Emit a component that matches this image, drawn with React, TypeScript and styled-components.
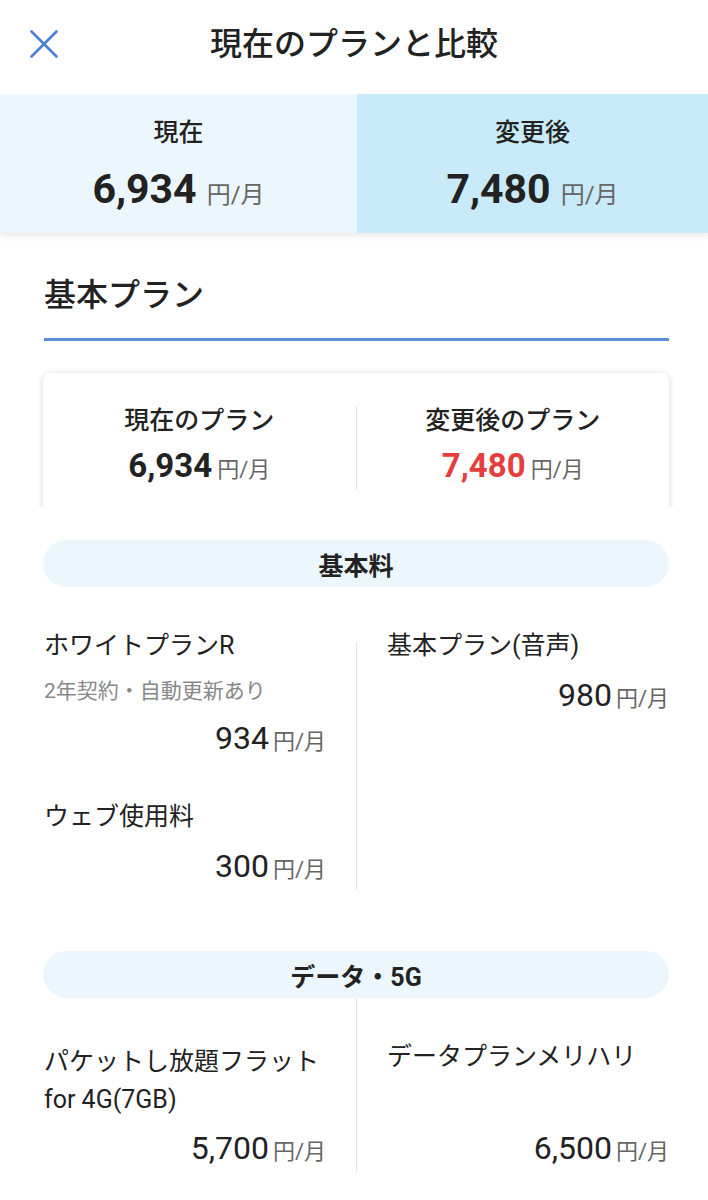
import React from 'react';
import styled, { createGlobalStyle } from 'styled-components';

const Global = createGlobalStyle`
  html, body { margin: 0; padding: 0; background: #fff; }
  body { font-family: Roboto, "Noto Sans CJK JP", sans-serif; color: #222; }
  * { box-sizing: border-box; }
`;

const Page = styled.div`
  width: 708px;
  overflow: hidden;
`;

const TopBar = styled.header`
  height: 94px;
  display: grid;
  grid-template-columns: 88px 1fr 88px;
  align-items: center;
  padding-bottom: 6px;
`;

const CloseButton = styled.button`
  border: 0;
  background: none;
  padding: 0 0 0 30px;
  margin: 0;
  display: flex;
  align-items: center;
  cursor: pointer;
`;

const Title = styled.h1`
  margin: 0;
  text-align: center;
  font-size: 32px;
  line-height: 44px;
  font-weight: 500;
  color: #222;
`;

const SummaryBand = styled.div`
  position: relative;
  z-index: 1;
  display: grid;
  grid-template-columns: 357px 1fr;
  height: 139px;
  box-shadow: 0 4px 6px rgba(0, 0, 0, 0.07);
`;

const SummaryCell = styled.div<{ $bg: string }>`
  background: ${(p) => p.$bg};
  display: flex;
  flex-direction: column;
  align-items: center;
  padding-top: 22px;
`;

const SummaryLabel = styled.div`
  font-size: 25px;
  line-height: 34px;
  font-weight: 500;
`;

const SummaryPrice = styled.div`
  margin-top: 14px;
  display: flex;
  align-items: baseline;
  line-height: 50px;
`;

const BigNumber = styled.span<{ $size: number; $color?: string }>`
  font-size: ${(p) => p.$size}px;
  font-weight: 700;
  color: ${(p) => p.$color || '#222'};
`;

const Unit = styled.span<{ $size: number; $gap: number }>`
  font-size: ${(p) => p.$size}px;
  color: #666;
  margin-left: ${(p) => p.$gap}px;
`;

const Section = styled.section`
  padding: 0 39px 0 43px;
`;

const SectionTitle = styled.h2`
  margin: 40px 0 0 1px;
  font-size: 32px;
  line-height: 44px;
  font-weight: 500;
  padding-bottom: 21px;
  border-bottom: 3px solid #5b8dd9;
`;

const CardClip = styled.div`
  margin: 20px -12px 0;
  padding: 12px 12px 0;
  height: 146px;
  overflow: hidden;
`;

const Card = styled.div`
  background: #fff;
  border-radius: 8px;
  box-shadow: 0 1px 7px rgba(0, 0, 0, 0.16);
  display: grid;
  grid-template-columns: 1fr 1px 1fr;
  padding: 31px 0 40px;
`;

const CardCol = styled.div`
  display: flex;
  flex-direction: column;
  align-items: center;
`;

const CardLabel = styled.div`
  font-size: 25px;
  line-height: 34px;
  font-weight: 500;
`;

const CardPrice = styled.div`
  margin-top: 8px;
  display: flex;
  align-items: baseline;
  line-height: 40px;
`;

const VDivider = styled.div<{ $top?: number }>`
  background: #e2e2e2;
  width: 1px;
  margin-top: ${(p) => p.$top || 0}px;
`;

const Pill = styled.div<{ $top: number }>`
  margin-top: ${(p) => p.$top}px;
  height: 47px;
  border-radius: 24px;
  background: #ebf6fd;
  display: flex;
  align-items: center;
  justify-content: center;
  font-size: 25px;
  font-weight: 700;
  color: #222;
`;

const CompareGrid = styled.div`
  display: grid;
  grid-template-columns: 1fr 1px 1fr;
  column-gap: 30px;
  padding-left: 1px;
`;

const Column = styled.div<{ $top: number }>`
  padding-top: ${(p) => p.$top}px;
  display: flex;
  flex-direction: column;
`;

const Item = styled.div<{ $fill?: boolean }>`
  display: flex;
  flex-direction: column;
  flex: ${(p) => (p.$fill ? 1 : 'none')};
  & + & {
    margin-top: 35px;
  }
`;

const ItemLabel = styled.div<{ $lh?: number }>`
  font-size: 25px;
  line-height: ${(p) => p.$lh || 40}px;
  color: #222;
`;

const ItemSub = styled.div`
  margin-top: 10px;
  padding-bottom: 3px;
  font-size: 21px;
  line-height: 30px;
  color: #888;
`;

const ItemPrice = styled.div<{ $push?: boolean }>`
  margin-top: ${(p) => (p.$push ? 'auto' : '9px')};
  padding-top: ${(p) => (p.$push ? '9px' : '0')};
  display: flex;
  justify-content: flex-end;
  align-items: baseline;
  line-height: 40px;
`;

const PriceNumber = styled.span`
  font-size: 32px;
  color: #222;
`;

const CloseIcon = () => (
  <svg width="28" height="28" viewBox="0 0 28 28" fill="none">
    <path d="M1.5 1.5L26.5 26.5M26.5 1.5L1.5 26.5" stroke="#4a80d4" strokeWidth="2.6" strokeLinecap="round" />
  </svg>
);

const Price = ({ value, push }: { value: string; push?: boolean }) => (
  <ItemPrice $push={push}>
    <PriceNumber>{value}</PriceNumber>
    <Unit $size={22} $gap={4}>円/月</Unit>
  </ItemPrice>
);

export default function App() {
  return (
    <Page>
      <Global />
      <TopBar>
        <CloseButton aria-label="閉じる">
          <CloseIcon />
        </CloseButton>
        <Title>現在のプランと比較</Title>
        <div />
      </TopBar>

      <SummaryBand>
        <SummaryCell $bg="#ebf7fd">
          <SummaryLabel>現在</SummaryLabel>
          <SummaryPrice>
            <BigNumber $size={41}>6,934</BigNumber>
            <Unit $size={24} $gap={10}>円/月</Unit>
          </SummaryPrice>
        </SummaryCell>
        <SummaryCell $bg="#c9eaf9">
          <SummaryLabel>変更後</SummaryLabel>
          <SummaryPrice>
            <BigNumber $size={41}>7,480</BigNumber>
            <Unit $size={24} $gap={10}>円/月</Unit>
          </SummaryPrice>
        </SummaryCell>
      </SummaryBand>

      <Section>
        <SectionTitle>基本プラン</SectionTitle>

        <CardClip>
          <Card>
            <CardCol>
              <CardLabel>現在のプラン</CardLabel>
              <CardPrice>
                <BigNumber $size={33}>6,934</BigNumber>
                <Unit $size={22} $gap={5}>円/月</Unit>
              </CardPrice>
            </CardCol>
            <VDivider $top={2} />
            <CardCol>
              <CardLabel>変更後のプラン</CardLabel>
              <CardPrice>
                <BigNumber $size={33} $color="#e63e3e">7,480</BigNumber>
                <Unit $size={22} $gap={5}>円/月</Unit>
              </CardPrice>
            </CardCol>
          </Card>
        </CardClip>

        <Pill $top={33}>基本料</Pill>
        <CompareGrid>
          <Column $top={39}>
            <Item>
              <ItemLabel>ホワイトプランR</ItemLabel>
              <ItemSub>2年契約・自動更新あり</ItemSub>
              <Price value="934" />
            </Item>
            <Item>
              <ItemLabel>ウェブ使用料</ItemLabel>
              <Price value="300" />
            </Item>
          </Column>
          <VDivider $top={55} />
          <Column $top={39}>
            <Item>
              <ItemLabel>基本プラン(音声)</ItemLabel>
              <Price value="980" />
            </Item>
          </Column>
        </CompareGrid>

        <Pill $top={61}>データ・5G</Pill>
        <CompareGrid>
          <Column $top={45}>
            <Item $fill>
              <ItemLabel $lh={38}>
                パケットし放題フラット
                <br />
                for 4G(7GB)
              </ItemLabel>
              <Price value="5,700" push />
            </Item>
          </Column>
          <VDivider />
          <Column $top={39}>
            <Item $fill>
              <ItemLabel>データプランメリハリ</ItemLabel>
              <Price value="6,500" push />
            </Item>
          </Column>
        </CompareGrid>
      </Section>
    </Page>
  );
}
